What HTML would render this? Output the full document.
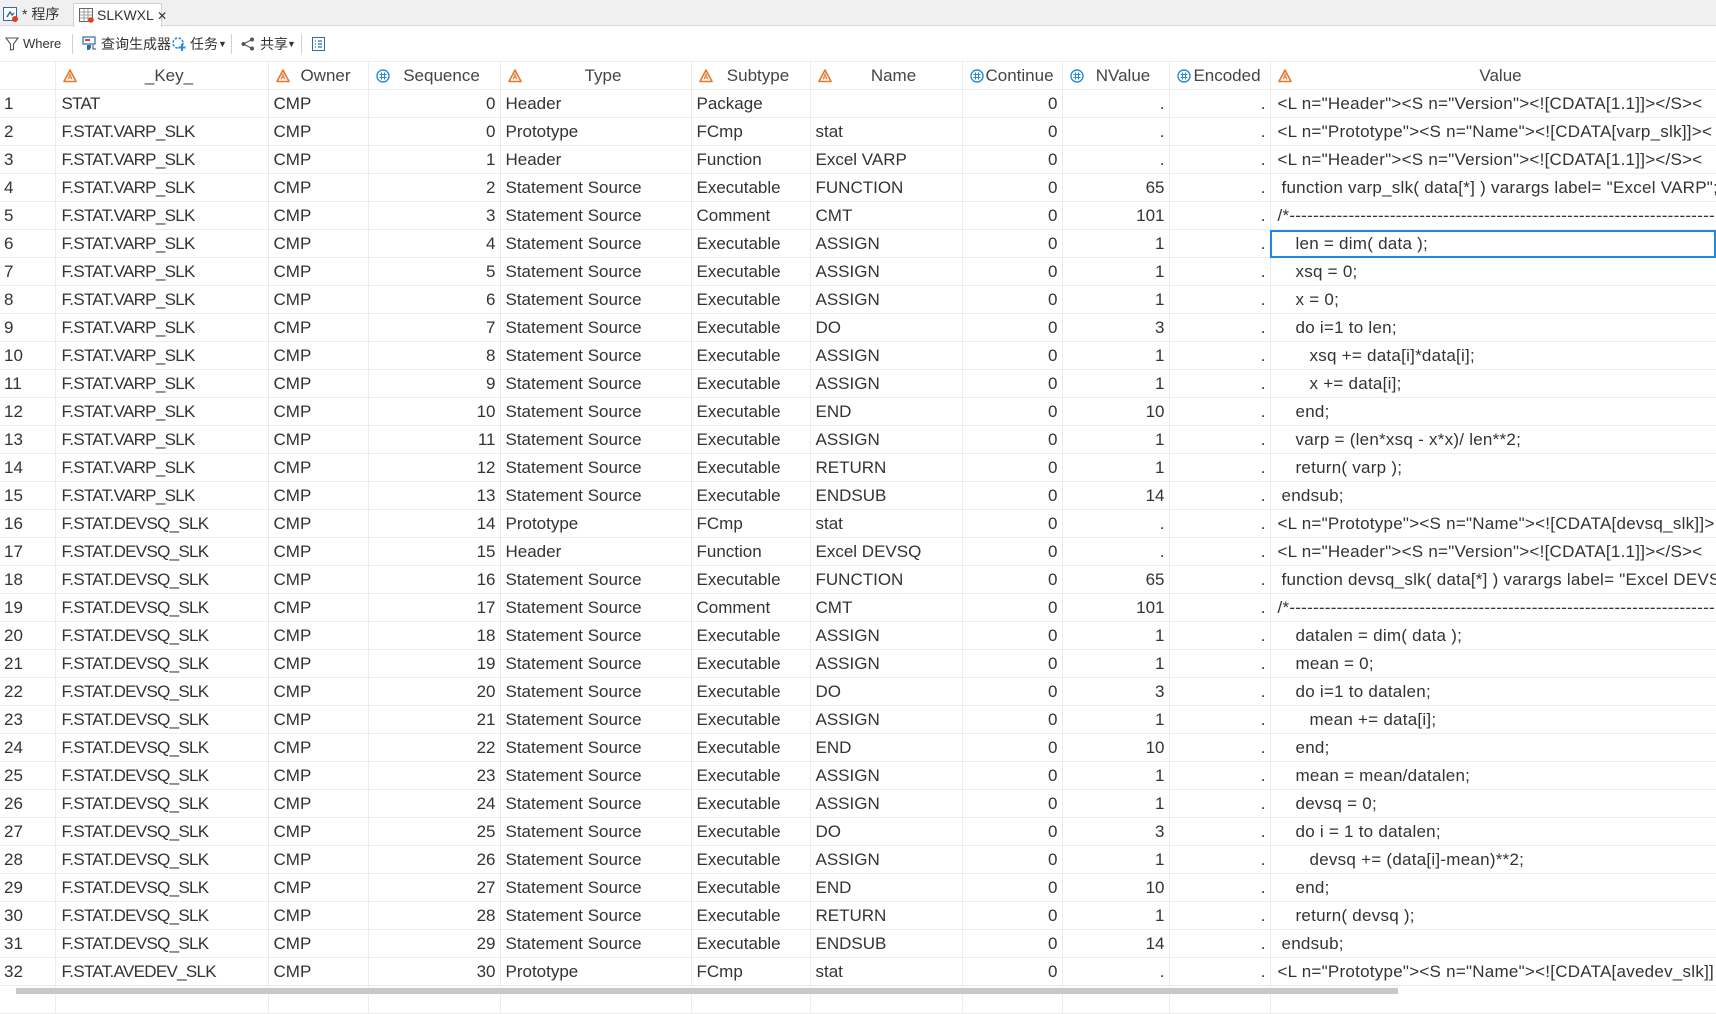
<!DOCTYPE html>
<html><head><meta charset="utf-8"><style>
*{margin:0;padding:0;box-sizing:border-box}
body{width:1716px;height:995px;overflow:hidden;background:#fff;font-family:"Liberation Sans","Noto Sans CJK SC",sans-serif;color:#333;position:relative}
.tabbar{position:absolute;left:0;top:0;width:1716px;height:26px;background:#f0f0f0;border-bottom:1px solid #d8d8d8}
.tab{position:absolute;top:3px;height:24px;font-size:14px;line-height:22px;color:#333}
.tab.act{left:73px;width:89px;background:#fff;border:1px solid #d0d0d0;border-bottom:none}
.tb{position:absolute;top:26px;left:0;width:1716px;height:36px;font-size:14px;color:#333}
.tb span{position:absolute;top:9px;line-height:18px;white-space:nowrap}
.sep{position:absolute;top:8px;width:1px;height:20px;background:#d0d0d0}
table{position:absolute;left:0;top:61px;border-collapse:collapse;table-layout:fixed;width:1716px;font-size:17px}
td,th{height:28px;border:1px solid #ececec;white-space:pre;overflow:hidden;padding:0 5px;line-height:26px;font-weight:normal}
th{font-size:17px;color:#444;position:relative;text-align:center;padding-left:20px}
th svg{position:absolute;left:7px;top:7px}
td.r{text-align:right;padding-right:4px}
td.k{letter-spacing:-0.7px;padding-left:6px}
td.v{padding-left:7px;letter-spacing:0.25px}
tr td:first-child{padding-left:4px;border-left:none}
.sel{outline:2px solid #1e88e5;outline-offset:-2px}
.sb{position:absolute;left:16px;top:988px;width:1382px;height:6px;background:#c8c8c8}
</style></head><body>
<div class="tabbar">
<div class="tab" style="left:3px"><svg width="15" height="15" style="position:absolute;left:0;top:4px" viewBox="0 0 15 15"><rect x="0.5" y="0.5" width="13" height="13" fill="#fff" stroke="#2b6cb0"/><path d="M4 10l3-5 2 3 2-2" stroke="#2b6cb0" fill="none" stroke-width="1.5"/><circle cx="12" cy="12" r="3" fill="#e53e1e"/></svg><span style="position:absolute;left:19px;white-space:nowrap">* 程序</span></div>
<div class="tab act"><svg width="15" height="15" style="position:absolute;left:5px;top:4px" viewBox="0 0 15 15"><rect x="0.5" y="0.5" width="13" height="13" fill="#fff" stroke="#666"/><path d="M1 4h12M1 7h12M1 10h12M5 1v13M9 1v13" stroke="#888" stroke-width="0.8"/><circle cx="12" cy="12" r="2.8" fill="#e53e1e"/></svg><span style="position:absolute;left:23px;white-space:nowrap">SLKWXL <span style="font-size:12px">✕</span></span></div>
</div>
<div class="tb">
<svg width="14" height="14" style="position:absolute;left:5px;top:11px" viewBox="0 0 14 14"><path d="M1 1h12L8.5 7v5.5L5.5 13V7z" fill="none" stroke="#555" stroke-width="1.1"/></svg>
<span style="left:23px;font-size:13px">Where</span>
<div class="sep" style="left:72px"></div>
<svg width="15" height="15" style="position:absolute;left:82px;top:10px" viewBox="0 0 15 15"><rect x="1" y="1" width="12" height="7" fill="none" stroke="#2b6cb0" stroke-width="1.2"/><rect x="3" y="3" width="5" height="2" fill="#e53e1e"/><path d="M4 9h5v3l-2 2H5V9" fill="#2b6cb0"/><path d="M11 9v4h3" stroke="#444" fill="none"/></svg>
<span style="left:101px">查询生成器</span>
<svg width="16" height="16" style="position:absolute;left:171px;top:10px" viewBox="0 0 16 16"><circle cx="7" cy="7" r="5" fill="none" stroke="#2b8ad8" stroke-width="1.6" stroke-dasharray="2.5 1.5"/><path d="M11 8v7M7.5 11.5h7" stroke="#2b8ad8" stroke-width="2"/></svg>
<span style="left:190px">任务</span><span style="left:218px;font-size:9px">▼</span>
<div class="sep" style="left:231px"></div>
<svg width="14" height="14" style="position:absolute;left:241px;top:11px" viewBox="0 0 14 14"><circle cx="11" cy="2.5" r="2" fill="#555"/><circle cx="2.5" cy="7" r="2" fill="#555"/><circle cx="11" cy="11.5" r="2" fill="#555"/><path d="M11 2.5L2.5 7l8.5 4.5" stroke="#555" fill="none"/></svg>
<span style="left:260px">共享</span><span style="left:287px;font-size:9px">▼</span>
<div class="sep" style="left:301px"></div>
<svg width="13" height="14" style="position:absolute;left:312px;top:11px" viewBox="0 0 13 14"><rect x="0.5" y="0.5" width="12" height="13" fill="none" stroke="#2b6cb0"/><path d="M3 4h1M3 7h1M3 10h1M6 4h4M6 7h4M6 10h4" stroke="#2b6cb0" stroke-width="1.2"/></svg>
</div>
<svg width="0" height="0" style="position:absolute"><defs>
<symbol id="a" viewBox="0 0 14 14"><path d="M7 1L13 12.5H1z" fill="#fff" stroke="#e07a2e" stroke-width="1.6" stroke-linejoin="round"/><path d="M5 10.5L7 5l2 5.5M5.7 8.8h2.6" stroke="#e07a2e" stroke-width="1" fill="none"/></symbol>
<symbol id="n" viewBox="0 0 14 14"><circle cx="7" cy="7" r="6" fill="#fff" stroke="#2b8ad8" stroke-width="1.4"/><path d="M5.5 3.5v7M8.5 3.5v7M3.5 5.5h7M3.5 8.5h7" stroke="#2b8ad8" stroke-width="1"/></symbol>
</defs></svg>
<table>
<colgroup><col style="width:55px"><col style="width:213px"><col style="width:100px"><col style="width:132px"><col style="width:191px"><col style="width:119px"><col style="width:152px"><col style="width:100px"><col style="width:107px"><col style="width:101px"><col style="width:446px"></colgroup>
<tr><th style="border-left:none"></th>
<th><svg width="14" height="14"><use href="#a"/></svg>_Key_</th>
<th><svg width="14" height="14"><use href="#a"/></svg>Owner</th>
<th><svg width="14" height="14"><use href="#n"/></svg>Sequence</th>
<th><svg width="14" height="14"><use href="#a"/></svg>Type</th>
<th><svg width="14" height="14"><use href="#a"/></svg>Subtype</th>
<th><svg width="14" height="14"><use href="#a"/></svg>Name</th>
<th><svg width="14" height="14"><use href="#n"/></svg>Continue</th>
<th><svg width="14" height="14"><use href="#n"/></svg>NValue</th>
<th><svg width="14" height="14"><use href="#n"/></svg>Encoded</th>
<th><svg width="14" height="14"><use href="#a"/></svg>Value</th></tr>
<tr><td>1</td><td class="k">STAT</td><td>CMP</td><td class="r">0</td><td>Header</td><td>Package</td><td></td><td class="r">0</td><td class="r">.</td><td class="r">.</td><td class="v">&lt;L n="Header"&gt;&lt;S n="Version"&gt;&lt;![CDATA[1.1]]&gt;&lt;/S&gt;&lt;</td></tr>
<tr><td>2</td><td class="k">F.STAT.VARP_SLK</td><td>CMP</td><td class="r">0</td><td>Prototype</td><td>FCmp</td><td>stat</td><td class="r">0</td><td class="r">.</td><td class="r">.</td><td class="v">&lt;L n="Prototype"&gt;&lt;S n="Name"&gt;&lt;![CDATA[varp_slk]]&gt;&lt;</td></tr>
<tr><td>3</td><td class="k">F.STAT.VARP_SLK</td><td>CMP</td><td class="r">1</td><td>Header</td><td>Function</td><td>Excel VARP</td><td class="r">0</td><td class="r">.</td><td class="r">.</td><td class="v">&lt;L n="Header"&gt;&lt;S n="Version"&gt;&lt;![CDATA[1.1]]&gt;&lt;/S&gt;&lt;</td></tr>
<tr><td>4</td><td class="k">F.STAT.VARP_SLK</td><td>CMP</td><td class="r">2</td><td>Statement Source</td><td>Executable</td><td>FUNCTION</td><td class="r">0</td><td class="r">65</td><td class="r">.</td><td class="v" style="padding-left:11px">function varp_slk( data[*] ) varargs label= "Excel VARP";</td></tr>
<tr><td>5</td><td class="k">F.STAT.VARP_SLK</td><td>CMP</td><td class="r">3</td><td>Statement Source</td><td>Comment</td><td>CMT</td><td class="r">0</td><td class="r">101</td><td class="r">.</td><td class="v">/*------------------------------------------------------------------------</td></tr>
<tr><td>6</td><td class="k">F.STAT.VARP_SLK</td><td>CMP</td><td class="r">4</td><td>Statement Source</td><td>Executable</td><td>ASSIGN</td><td class="r">0</td><td class="r">1</td><td class="r">.</td><td class="v sel" style="padding-left:25px">len = dim( data );</td></tr>
<tr><td>7</td><td class="k">F.STAT.VARP_SLK</td><td>CMP</td><td class="r">5</td><td>Statement Source</td><td>Executable</td><td>ASSIGN</td><td class="r">0</td><td class="r">1</td><td class="r">.</td><td class="v" style="padding-left:25px">xsq = 0;</td></tr>
<tr><td>8</td><td class="k">F.STAT.VARP_SLK</td><td>CMP</td><td class="r">6</td><td>Statement Source</td><td>Executable</td><td>ASSIGN</td><td class="r">0</td><td class="r">1</td><td class="r">.</td><td class="v" style="padding-left:25px">x = 0;</td></tr>
<tr><td>9</td><td class="k">F.STAT.VARP_SLK</td><td>CMP</td><td class="r">7</td><td>Statement Source</td><td>Executable</td><td>DO</td><td class="r">0</td><td class="r">3</td><td class="r">.</td><td class="v" style="padding-left:25px">do i=1 to len;</td></tr>
<tr><td>10</td><td class="k">F.STAT.VARP_SLK</td><td>CMP</td><td class="r">8</td><td>Statement Source</td><td>Executable</td><td>ASSIGN</td><td class="r">0</td><td class="r">1</td><td class="r">.</td><td class="v" style="padding-left:39px">xsq += data[i]*data[i];</td></tr>
<tr><td>11</td><td class="k">F.STAT.VARP_SLK</td><td>CMP</td><td class="r">9</td><td>Statement Source</td><td>Executable</td><td>ASSIGN</td><td class="r">0</td><td class="r">1</td><td class="r">.</td><td class="v" style="padding-left:39px">x += data[i];</td></tr>
<tr><td>12</td><td class="k">F.STAT.VARP_SLK</td><td>CMP</td><td class="r">10</td><td>Statement Source</td><td>Executable</td><td>END</td><td class="r">0</td><td class="r">10</td><td class="r">.</td><td class="v" style="padding-left:25px">end;</td></tr>
<tr><td>13</td><td class="k">F.STAT.VARP_SLK</td><td>CMP</td><td class="r">11</td><td>Statement Source</td><td>Executable</td><td>ASSIGN</td><td class="r">0</td><td class="r">1</td><td class="r">.</td><td class="v" style="padding-left:25px">varp = (len*xsq - x*x)/ len**2;</td></tr>
<tr><td>14</td><td class="k">F.STAT.VARP_SLK</td><td>CMP</td><td class="r">12</td><td>Statement Source</td><td>Executable</td><td>RETURN</td><td class="r">0</td><td class="r">1</td><td class="r">.</td><td class="v" style="padding-left:25px">return( varp );</td></tr>
<tr><td>15</td><td class="k">F.STAT.VARP_SLK</td><td>CMP</td><td class="r">13</td><td>Statement Source</td><td>Executable</td><td>ENDSUB</td><td class="r">0</td><td class="r">14</td><td class="r">.</td><td class="v" style="padding-left:11px">endsub;</td></tr>
<tr><td>16</td><td class="k">F.STAT.DEVSQ_SLK</td><td>CMP</td><td class="r">14</td><td>Prototype</td><td>FCmp</td><td>stat</td><td class="r">0</td><td class="r">.</td><td class="r">.</td><td class="v">&lt;L n="Prototype"&gt;&lt;S n="Name"&gt;&lt;![CDATA[devsq_slk]]&gt;</td></tr>
<tr><td>17</td><td class="k">F.STAT.DEVSQ_SLK</td><td>CMP</td><td class="r">15</td><td>Header</td><td>Function</td><td>Excel DEVSQ</td><td class="r">0</td><td class="r">.</td><td class="r">.</td><td class="v">&lt;L n="Header"&gt;&lt;S n="Version"&gt;&lt;![CDATA[1.1]]&gt;&lt;/S&gt;&lt;</td></tr>
<tr><td>18</td><td class="k">F.STAT.DEVSQ_SLK</td><td>CMP</td><td class="r">16</td><td>Statement Source</td><td>Executable</td><td>FUNCTION</td><td class="r">0</td><td class="r">65</td><td class="r">.</td><td class="v" style="padding-left:11px">function devsq_slk( data[*] ) varargs label= "Excel DEVSQ</td></tr>
<tr><td>19</td><td class="k">F.STAT.DEVSQ_SLK</td><td>CMP</td><td class="r">17</td><td>Statement Source</td><td>Comment</td><td>CMT</td><td class="r">0</td><td class="r">101</td><td class="r">.</td><td class="v">/*------------------------------------------------------------------------</td></tr>
<tr><td>20</td><td class="k">F.STAT.DEVSQ_SLK</td><td>CMP</td><td class="r">18</td><td>Statement Source</td><td>Executable</td><td>ASSIGN</td><td class="r">0</td><td class="r">1</td><td class="r">.</td><td class="v" style="padding-left:25px">datalen = dim( data );</td></tr>
<tr><td>21</td><td class="k">F.STAT.DEVSQ_SLK</td><td>CMP</td><td class="r">19</td><td>Statement Source</td><td>Executable</td><td>ASSIGN</td><td class="r">0</td><td class="r">1</td><td class="r">.</td><td class="v" style="padding-left:25px">mean = 0;</td></tr>
<tr><td>22</td><td class="k">F.STAT.DEVSQ_SLK</td><td>CMP</td><td class="r">20</td><td>Statement Source</td><td>Executable</td><td>DO</td><td class="r">0</td><td class="r">3</td><td class="r">.</td><td class="v" style="padding-left:25px">do i=1 to datalen;</td></tr>
<tr><td>23</td><td class="k">F.STAT.DEVSQ_SLK</td><td>CMP</td><td class="r">21</td><td>Statement Source</td><td>Executable</td><td>ASSIGN</td><td class="r">0</td><td class="r">1</td><td class="r">.</td><td class="v" style="padding-left:39px">mean += data[i];</td></tr>
<tr><td>24</td><td class="k">F.STAT.DEVSQ_SLK</td><td>CMP</td><td class="r">22</td><td>Statement Source</td><td>Executable</td><td>END</td><td class="r">0</td><td class="r">10</td><td class="r">.</td><td class="v" style="padding-left:25px">end;</td></tr>
<tr><td>25</td><td class="k">F.STAT.DEVSQ_SLK</td><td>CMP</td><td class="r">23</td><td>Statement Source</td><td>Executable</td><td>ASSIGN</td><td class="r">0</td><td class="r">1</td><td class="r">.</td><td class="v" style="padding-left:25px">mean = mean/datalen;</td></tr>
<tr><td>26</td><td class="k">F.STAT.DEVSQ_SLK</td><td>CMP</td><td class="r">24</td><td>Statement Source</td><td>Executable</td><td>ASSIGN</td><td class="r">0</td><td class="r">1</td><td class="r">.</td><td class="v" style="padding-left:25px">devsq = 0;</td></tr>
<tr><td>27</td><td class="k">F.STAT.DEVSQ_SLK</td><td>CMP</td><td class="r">25</td><td>Statement Source</td><td>Executable</td><td>DO</td><td class="r">0</td><td class="r">3</td><td class="r">.</td><td class="v" style="padding-left:25px">do i = 1 to datalen;</td></tr>
<tr><td>28</td><td class="k">F.STAT.DEVSQ_SLK</td><td>CMP</td><td class="r">26</td><td>Statement Source</td><td>Executable</td><td>ASSIGN</td><td class="r">0</td><td class="r">1</td><td class="r">.</td><td class="v" style="padding-left:39px">devsq += (data[i]-mean)**2;</td></tr>
<tr><td>29</td><td class="k">F.STAT.DEVSQ_SLK</td><td>CMP</td><td class="r">27</td><td>Statement Source</td><td>Executable</td><td>END</td><td class="r">0</td><td class="r">10</td><td class="r">.</td><td class="v" style="padding-left:25px">end;</td></tr>
<tr><td>30</td><td class="k">F.STAT.DEVSQ_SLK</td><td>CMP</td><td class="r">28</td><td>Statement Source</td><td>Executable</td><td>RETURN</td><td class="r">0</td><td class="r">1</td><td class="r">.</td><td class="v" style="padding-left:25px">return( devsq );</td></tr>
<tr><td>31</td><td class="k">F.STAT.DEVSQ_SLK</td><td>CMP</td><td class="r">29</td><td>Statement Source</td><td>Executable</td><td>ENDSUB</td><td class="r">0</td><td class="r">14</td><td class="r">.</td><td class="v" style="padding-left:11px">endsub;</td></tr>
<tr><td>32</td><td class="k">F.STAT.AVEDEV_SLK</td><td>CMP</td><td class="r">30</td><td>Prototype</td><td>FCmp</td><td>stat</td><td class="r">0</td><td class="r">.</td><td class="r">.</td><td class="v">&lt;L n="Prototype"&gt;&lt;S n="Name"&gt;&lt;![CDATA[avedev_slk]]</td></tr>
<tr><td></td><td></td><td></td><td></td><td></td><td></td><td></td><td></td><td></td><td></td><td></td></tr>
</table>
<div class="sb"></div>
</body></html>
